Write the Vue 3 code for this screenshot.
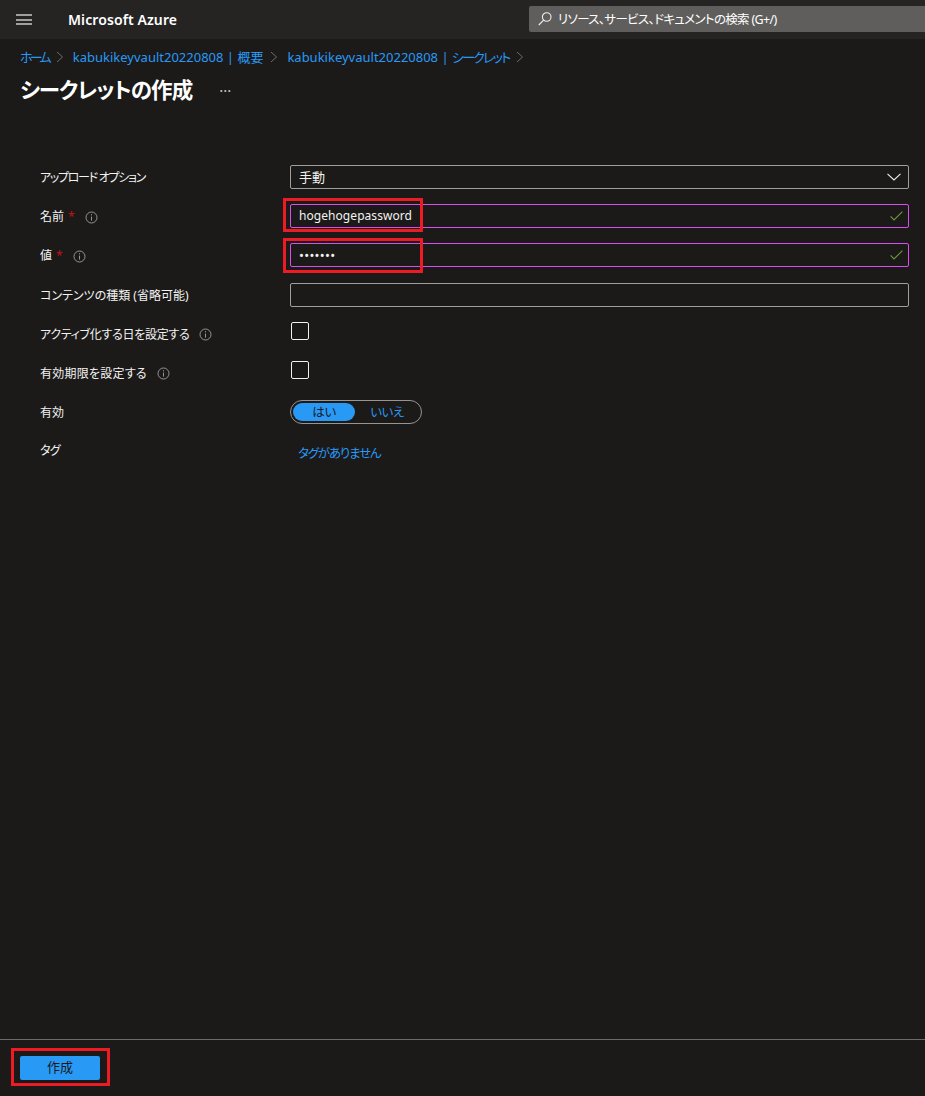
<script setup>
const vault = 'kabukikeyvault20220808 | '
</script>

<template>
  <div class="page">
    <header class="topbar">
      <button class="menu" aria-label="menu"><span></span><span></span><span></span></button>
      <div class="brand">Microsoft Azure</div>
      <div class="search">
        <svg width="16" height="16" viewBox="0 0 16 16" fill="none" stroke="#f0f0f0" stroke-width="1.1">
          <circle cx="9.7" cy="6" r="4.3" />
          <path d="M6.6 9.1 1.8 14" />
        </svg>
        <span class="search-text">リソース、サービス、ドキュメントの検索 (G+/)</span>
      </div>
    </header>

    <main class="main">
      <nav class="crumbs">
        <a class="home">ホーム</a>
        <svg class="sep" width="8" height="12" viewBox="0 0 8 12" fill="none" stroke="#6e6d6c" stroke-width="1"><path d="M1 1l5.5 5L1 11" /></svg>
        <a>{{ vault }}概要</a>
        <svg class="sep" width="8" height="12" viewBox="0 0 8 12" fill="none" stroke="#6e6d6c" stroke-width="1"><path d="M1 1l5.5 5L1 11" /></svg>
        <a>{{ vault }}<span class="kana">シークレット</span></a>
        <svg class="sep" width="8" height="12" viewBox="0 0 8 12" fill="none" stroke="#6e6d6c" stroke-width="1"><path d="M1 1l5.5 5L1 11" /></svg>
      </nav>
      <div class="titlebar">
        <h1>シークレットの作成</h1>
        <span class="dots">···</span>
      </div>

      <form class="form">
        <div class="row">
          <label class="tight">アップロード オプション</label>
          <div class="field select">
            <span>手動</span>
            <svg width="14" height="8" viewBox="0 0 14 8" fill="none" stroke="#f0f0f0" stroke-width="1.1"><path d="M.5.8 7 7 13.5.8" /></svg>
          </div>
        </div>
        <div class="row">
          <label>名前 <i class="req">*</i>
            <svg class="info" width="13" height="13" viewBox="0 0 13 13" fill="none" stroke="#979593"><circle cx="6.5" cy="6.5" r="5.5" /><path d="M6.5 5.6v4M6.5 3.2v1.2" /></svg>
          </label>
          <div class="field valid">
            <span class="val">hogehogepassword</span>
            <svg width="13" height="10" viewBox="0 0 13 10" fill="none" stroke="#6b9a3a" stroke-width="1.1"><path d="M.6 5.4 4 9 12.4.6" /></svg>
            <div class="mark"></div>
          </div>
        </div>
        <div class="row">
          <label>値 <i class="req">*</i>
            <svg class="info" width="13" height="13" viewBox="0 0 13 13" fill="none" stroke="#979593"><circle cx="6.5" cy="6.5" r="5.5" /><path d="M6.5 5.6v4M6.5 3.2v1.2" /></svg>
          </label>
          <div class="field valid">
            <span class="pw">•••••••</span>
            <svg width="13" height="10" viewBox="0 0 13 10" fill="none" stroke="#6b9a3a" stroke-width="1.1"><path d="M.6 5.4 4 9 12.4.6" /></svg>
            <div class="mark mark2"></div>
          </div>
        </div>
        <div class="row row-low">
          <label>コンテンツの種類 (省略可能)</label>
          <div class="field"></div>
        </div>
        <div class="row check-row">
          <label class="slight">アクティブ化する日を設定する
            <svg class="info" width="13" height="13" viewBox="0 0 13 13" fill="none" stroke="#979593"><circle cx="6.5" cy="6.5" r="5.5" /><path d="M6.5 5.6v4M6.5 3.2v1.2" /></svg>
          </label>
          <div class="check"></div>
        </div>
        <div class="row check-row">
          <label class="wide">有効期限を設定する
            <svg class="info" width="13" height="13" viewBox="0 0 13 13" fill="none" stroke="#979593"><circle cx="6.5" cy="6.5" r="5.5" /><path d="M6.5 5.6v4M6.5 3.2v1.2" /></svg>
          </label>
          <div class="check"></div>
        </div>
        <div class="row toggle-row">
          <label>有効</label>
          <div class="toggle">
            <span class="on">はい</span>
            <span class="off">いいえ</span>
          </div>
        </div>
        <div class="row tag-row">
          <label class="tag-label">タグ</label>
          <a class="tags">タグがありません</a>
        </div>
      </form>
    </main>

    <footer class="footer">
      <button class="create" type="button">作成<span class="mark3"></span></button>
    </footer>
  </div>
</template>

<style scoped>
.page {
  width: 925px;
  height: 1096px;
  display: flex;
  flex-direction: column;
  overflow: hidden;
  background: #1b1a19;
  color: #f3f2f1;
  font: 13px/18px "Noto Sans", "Noto Sans CJK JP", sans-serif;
  font-feature-settings: "palt";
}
.topbar {
  height: 39px;
  flex: none;
  display: flex;
  align-items: center;
  background: #252423;
}
.menu {
  width: 16px;
  height: 11px;
  margin-left: 16px;
  padding: 0;
  border: 0;
  background: none;
  display: flex;
  flex-direction: column;
  justify-content: space-between;
}
.menu span {
  display: block;
  height: 2px;
  background: #a19f9d;
}
.brand {
  margin-left: 36px;
  width: 461px;
  font-size: 14px;
  font-weight: 600;
  letter-spacing: 0.1px;
  color: #fff;
}
.search {
  flex: 1;
  height: 26px;
  margin-top: -1px;
  padding-left: 8px;
  display: flex;
  align-items: center;
  gap: 5px;
  background: #605e5c;
  border-radius: 2px 0 0 2px;
  font-size: 12.5px;
  letter-spacing: -0.67px;
  color: #fff;
}
.search-text {
  padding-top: 1px;
}
.main {
  flex: 1;
}
.crumbs {
  height: 18px;
  margin-top: 9px;
  padding-left: 20px;
  display: flex;
  align-items: center;
  color: #2899f5;
  white-space: pre;
}
.home {
  letter-spacing: -2.8px;
}
.kana {
  letter-spacing: -1.8px;
}
.sep {
  margin: 0 9px 0 7px;
}
.titlebar {
  display: flex;
  align-items: center;
  margin-top: 8px;
  padding-left: 20px;
  height: 32px;
}
h1 {
  margin: 0;
  font-size: 21.5px;
  line-height: 32px;
  font-weight: 600;
  letter-spacing: -0.9px;
  color: #fff;
}
.dots {
  margin-left: 27px;
  font-size: 15px;
  color: #c8c6c4;
}
.form {
  margin-top: 59px;
  padding: 0 16px 0 40px;
}
.row {
  display: grid;
  grid-template-columns: 250px 1fr;
  align-items: center;
  height: 24px;
  margin-bottom: 15px;
}
.row label {
  display: flex;
  align-items: center;
  padding-top: 2px;
  font-size: 12px;
}
.row label.tight {
  letter-spacing: -1.3px;
}
.row label.slight {
  letter-spacing: -0.3px;
}
.row label.wide {
  letter-spacing: 0.25px;
}
.row-low {
  margin-top: 16px;
  margin-bottom: 14px;
}
.req {
  margin-left: 4px;
  font-style: normal;
  color: #c50f1f;
}
.info {
  margin-left: 10px;
}
.field {
  position: relative;
  height: 24px;
  box-sizing: border-box;
  padding: 0 9px 0 8px;
  display: flex;
  align-items: center;
  justify-content: space-between;
  border: 1px solid #a19f9d;
  border-radius: 2px;
  font-size: 13px;
}
.select svg {
  margin-right: -2px;
}
.valid {
  border-color: #d84ff0;
}
.valid svg {
  margin-right: -4px;
}
.val {
  font-size: 12px;
  letter-spacing: 0.06px;
}
.pw {
  font-size: 13px;
  letter-spacing: 0.3px;
}
.mark {
  position: absolute;
  left: -8px;
  top: -7px;
  width: 134px;
  height: 28px;
  border: 3px solid #ed1c24;
}
.mark2 {
  top: -6px;
  height: 29px;
}
.check {
  width: 16px;
  height: 16px;
  margin-left: 1px;
  border: 1px solid #f3f2f1;
  border-radius: 2px;
}
.check-row label {
  margin-top: 1px;
}
.check-row .check {
  margin-top: -4px;
}
.toggle-row {
  margin-top: 16px;
}
.toggle {
  width: 132px;
  height: 24px;
  box-sizing: border-box;
  padding: 2px;
  display: flex;
  align-items: center;
  border: 1px solid #979593;
  border-radius: 12px;
}
.toggle span {
  height: 18px;
  display: flex;
  align-items: center;
  justify-content: center;
  padding-top: 1px;
  box-sizing: border-box;
  font-size: 12.5px;
  letter-spacing: -0.5px;
}
.on {
  width: 62px;
  border-radius: 9px;
  background: #2899f5;
  color: #1b1a19;
}
.off {
  flex: 1;
  color: #2899f5;
}
.tag-row {
  margin-top: -1px;
}
.row label.tag-label {
  margin-top: -1px;
  letter-spacing: -0.8px;
}
.tags {
  margin: 7px 0 0 8px;
  font-size: 12.5px;
  letter-spacing: -1.2px;
  color: #2899f5;
}
.footer {
  flex: none;
  height: 57px;
  box-sizing: border-box;
  padding: 16px 0 0 20px;
  border-top: 1px solid #6b6a69;
}
.create {
  position: relative;
  display: block;
  width: 80px;
  height: 24px;
  padding: 0 0 2px;
  box-sizing: border-box;
  border: 0;
  border-radius: 2px;
  background: #2899f5;
  color: #1b1a19;
  font: 13px/22px "Noto Sans", "Noto Sans CJK JP", sans-serif;
}
.mark3 {
  position: absolute;
  left: -9px;
  top: -8px;
  width: 93px;
  height: 32px;
  border: 3px solid #ed1c24;
}
</style>
